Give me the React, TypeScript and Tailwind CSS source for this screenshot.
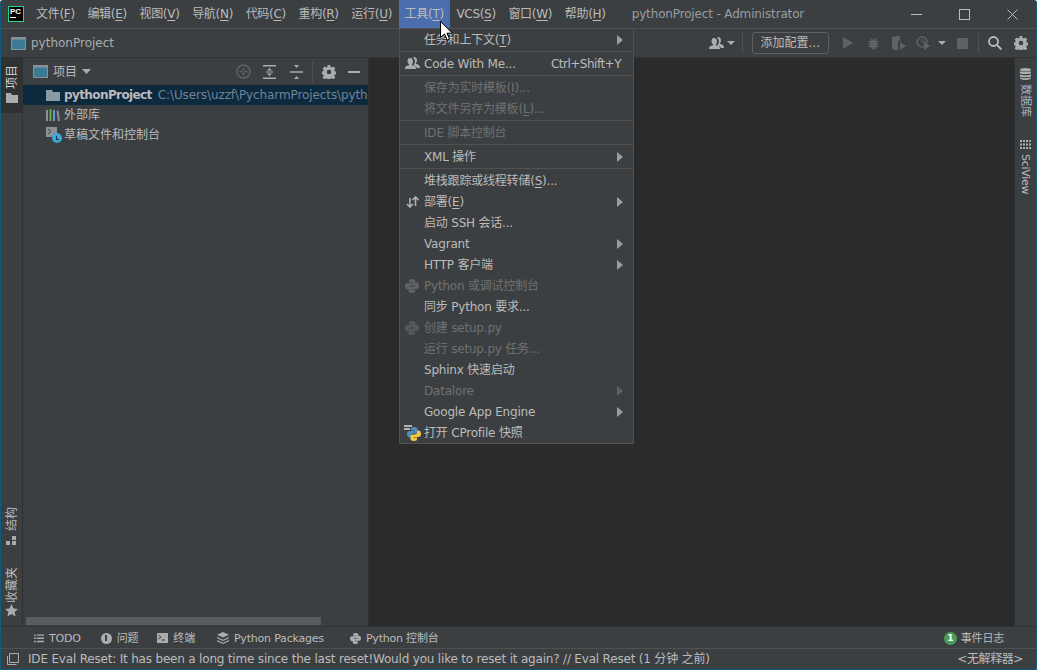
import type { ReactNode } from "react";

const font = "font-['DejaVu_Sans','Noto_Sans_CJK_SC',sans-serif]";

function Mn({ pre, k, post = ")" }: { pre: string; k: string; post?: string }) {
  return (
    <>
      {pre}
      <span className="underline underline-offset-2">{k}</span>
      {post}
    </>
  );
}

function TopItem({ children, active }: { children: ReactNode; active?: boolean }) {
  return (
    <div className={`flex h-full items-center whitespace-nowrap px-[6px] ${active ? "bg-[#4b6eaf] text-[#bbbbbb]" : ""}`}>
      {children}
    </div>
  );
}

function ProjectIcon({ className = "" }: { className?: string }) {
  return (
    <svg width="15" height="13" viewBox="0 0 15 13" className={className}>
      <rect x="0.5" y="0.5" width="14" height="12" fill="#3d7a96" stroke="#8a9299" />
      <rect x="1" y="1" width="13" height="1.5" fill="#8a9299" />
    </svg>
  );
}

function MenuRow({
  children,
  disabled,
  arrow,
  icon,
  right,
}: {
  children: ReactNode;
  disabled?: boolean;
  arrow?: boolean;
  icon?: ReactNode;
  right?: string;
}) {
  return (
    <div className={`relative flex h-[21px] items-center pl-[24px] pr-[12px] tracking-[-0.2px] ${disabled ? "text-[#6f7173]" : "text-[#bbbbbb]"}`}>
      {icon && <div className="absolute left-[3px] top-[2px] flex h-[17px] w-[18px] items-center justify-center">{icon}</div>}
      <span className="flex-1 whitespace-nowrap">{children}</span>
      {right && <span className="tracking-[-0.5px]">{right}</span>}
      {arrow && (
        <svg width="6" height="10" viewBox="0 0 6 10" className="-mr-[2px]">
          <path d="M0 0l6 5-6 5z" fill={disabled ? "#5f6264" : "#9a9da0"} />
        </svg>
      )}
    </div>
  );
}

function Sep() {
  return (
    <div className="flex h-[3px] items-center">
      <div className="h-px w-full bg-[#515151]" />
    </div>
  );
}

function PersonIcon({ fill = "#a9adb0" }: { fill?: string }) {
  return (
    <svg width="15" height="13" viewBox="0 0 15 13">
      <path d="M5 1c2 0 3 1.500 3 3.500 0 1.500-.7 2.500-1.200 3.200 0 .6 2.700 1 3.700 2 .3.400.5 1.300.5 2.300H0c0-1 .2-1.900.5-2.300 1-1 3.700-1.400 3.700-2C3.700 7 2.500 6 2.500 4.500 2.500 2.500 3 1 5 1z" fill={fill} />
      <path d="M9 0c2 0 3 1.500 3 3.300 0 1.500-.7 2.500-1.200 3.200 0 .6 2.700 1 3.500 2 .3.400.7 1.200.7 2.500h-3c-.5-1.500-3-2-3.500-3 .8-1 1.500-2.200 1.500-3.700C9.500 3 9.300 1.500 8 .3 8.300.1 8.600 0 9 0z" fill={fill} />
    </svg>
  );
}

function PythonGlyph({ a = "#5f6264", b = "#5f6264", size = 14 }: { a?: string; b?: string; size?: number }) {
  return (
    <svg width={size} height={size} viewBox="0 0 14 14">
      <path d="M7 0C4.500 0 4 1 4 2v1.500h3.500V4H2.500C1 4 0 5 0 7s1 3.500 2.300 3.500H3.800V8.700C3.800 7.500 4.700 6.600 6 6.600h2.800c1 0 1.700-.8 1.700-1.800V2C10.500 .9 9.500 0 7 0z" fill={a} />
      <path d="M7 14c2.500 0 3-1 3-2v-1.500H6.500V10h5c1.500 0 2.500-1 2.500-3s-1-3.500-2.300-3.500H10.200v1.800c0 1.200-.9 2.100-2.200 2.100H5.200c-1 0-1.700.8-1.700 1.800V12c0 1.100 1 2 3.500 2z" fill={b} />
    </svg>
  );
}

function ToolsMenu() {
  return (
    <div className="absolute left-[398px] top-[28px] z-10 w-[235px] border border-[#515151] bg-[#3c3f41]">
      <MenuRow arrow>
        任务和上下文(<Mn pre="" k="T" />
      </MenuRow>
      <Sep />
      <MenuRow icon={<PersonIcon />} right="Ctrl+Shift+Y">
        Code With Me...
      </MenuRow>
      <Sep />
      <MenuRow disabled>
        保存为实时模板(<Mn pre="" k="I" post=")..." />
      </MenuRow>
      <MenuRow disabled>
        将文件另存为模板(<Mn pre="" k="L" post=")..." />
      </MenuRow>
      <Sep />
      <MenuRow disabled>IDE 脚本控制台</MenuRow>
      <Sep />
      <MenuRow arrow>XML 操作</MenuRow>
      <Sep />
      <MenuRow>
        堆栈跟踪或线程转储(<Mn pre="" k="S" post=")..." />
      </MenuRow>
      <MenuRow
        arrow
        icon={
          <svg width="13" height="12" viewBox="0 0 13 12" fill="none" stroke="#afb1b3" strokeWidth="1.600">
            <path d="M4 2v9M1 8l3 3 3-3" />
            <path d="M9.500 10V1M6.500 4l3-3 3 3" />
          </svg>
        }
      >
        部署(<Mn pre="" k="E" />
      </MenuRow>
      <MenuRow>启动 SSH 会话...</MenuRow>
      <MenuRow arrow>Vagrant</MenuRow>
      <MenuRow arrow>HTTP 客户端</MenuRow>
      <MenuRow disabled icon={<PythonGlyph />}>
        Python 或调试控制台
      </MenuRow>
      <MenuRow>同步 Python 要求...</MenuRow>
      <MenuRow disabled icon={<PythonGlyph a="#56595b" b="#56595b" />}>
        创建 setup.py
      </MenuRow>
      <MenuRow disabled>运行 setup.py 任务...</MenuRow>
      <MenuRow>Sphinx 快速启动</MenuRow>
      <MenuRow disabled arrow>
        Datalore
      </MenuRow>
      <MenuRow arrow>Google App Engine</MenuRow>
      <MenuRow
        icon={
          <div className="relative h-[17px] w-[18px]">
            <div className="absolute left-[1px] top-[1px] h-[2px] w-[8px] bg-[#afb1b3]" />
            <div className="absolute left-[1px] top-[4px] h-[2px] w-[6px] bg-[#afb1b3]" />
            <div className="absolute bottom-0 right-0">
              <PythonGlyph a="#4d8fc4" b="#f4c93e" />
            </div>
          </div>
        }
      >
        打开 CProfile 快照
      </MenuRow>
    </div>
  );
}

function Cursor() {
  return (
    <svg width="14" height="20" viewBox="0 0 14 20" className="absolute left-[439px] top-[21px] z-20">
      <path d="M.5.5v16l4-3.500 2.700 6 2.300-1-2.600-5.800H12.500z" fill="#ffffff" stroke="#000000" strokeWidth="1" />
    </svg>
  );
}

function LeftStripe() {
  return (
    <div className="flex w-[22px] flex-none flex-col border-r border-[#2e3032] bg-[#3c3f41] text-[#bbbbbb]">
      <div className="flex h-[55px] flex-col items-center bg-[#2f3133] pt-[7px]">
        <span className="rotate-180 text-[#d0d0d0] [writing-mode:vertical-rl] [text-orientation:sideways]">项目</span>
        <svg width="12" height="10" viewBox="0 0 12 10" className="mt-[4px]">
          <path d="M0 0h5l1 2h6v8H0z" fill="#a9adb0" />
        </svg>
      </div>
      <div className="flex-1" />
      <div className="mb-[9px] flex flex-col items-center">
        <span className="rotate-180 [writing-mode:vertical-rl] [text-orientation:sideways]">结构</span>
        <svg width="11" height="9" viewBox="0 0 11 9" className="mt-[5px]">
          <path d="M0 5h4v4H0zM6 5h4v4H6zM6 0h4v4H6z" fill="#a9adb0" />
        </svg>
        <span className="mt-[22px] rotate-180 [writing-mode:vertical-rl] [text-orientation:sideways]">收藏夹</span>
        <svg width="13" height="13" viewBox="0 0 13 13" className="mt-[1px]">
          <path d="M6.500 0l2 4.500 4.500.4-3.400 3 1 4.600-4.100-2.400L2.400 12.500l1-4.600L0 4.900l4.500-.4z" fill="#a9adb0" />
        </svg>
      </div>
    </div>
  );
}

function ProjectPanel() {
  return (
    <div className="flex w-[345px] flex-none flex-col bg-[#3c3f41]">
      <div className="flex h-[27px] flex-none items-center pl-[10px] pr-[8px]">
        <ProjectIcon />
        <span className="ml-[5px]">项目</span>
        <svg width="9" height="5" viewBox="0 0 9 5" className="ml-[5px]">
          <path d="M0 0h9L4.500 5z" fill="#a9adb0" />
        </svg>
        <div className="flex-1" />
        <svg width="15" height="15" viewBox="0 0 15 15" fill="none" stroke="#5f6264" strokeWidth="1.500" className="mr-[12px]">
          <circle cx="7.500" cy="7.500" r="6.500" />
          <path d="M7.500 3.500v3M7.500 8.500v3M3.500 7.500h3M8.500 7.500h3" />
        </svg>
        <svg width="13" height="14" viewBox="0 0 13 14" className="mr-[14px]" fill="#a9adb0">
          <path d="M0 0h13v1.500H0zM0 12.500h13V14H0zM6.500 3l2.500 2.500H4zM6.500 11L4 8.500h5zM3 6.500h7v1H3z" />
        </svg>
        <svg width="13" height="14" viewBox="0 0 13 14" className="mr-[9px]" fill="#a9adb0">
          <path d="M0 6.300h13v1.400H0zM4 0h5L6.500 3zM6.500 11L9 14H4z" />
        </svg>
        <div className="mr-[9px] h-[20px] w-px bg-[#515151]" />
        <GearIcon className="mr-[12px]" />
        <div className="h-[2px] w-[12px] bg-[#a9adb0]" />
      </div>
      <div className="flex h-[20px] flex-none items-center overflow-hidden whitespace-nowrap bg-[#0d293e] pl-[23px]">
        <svg width="14" height="11" viewBox="0 0 14 11" className="flex-none">
          <path d="M0 0h6l1 2h7v9H0z" fill="#8a9ba8" />
        </svg>
        <span className="ml-[4px] font-bold tracking-[-0.6px] text-[#bbbbbb]">pythonProject</span>
        <span className="ml-[6px] tracking-[-0.1px] text-[#6f8496]">C:\Users\uzzf\PycharmProjects\pythonProject</span>
      </div>
      <div className="flex h-[20px] flex-none items-center pl-[23px]">
        <svg width="14" height="12" viewBox="0 0 14 12" className="flex-none">
          <path d="M0 1h2v11H0z" fill="#8a9299" />
          <path d="M3.500 0h2v12h-2z" fill="#6aab50" />
          <path d="M7 1h2v11H7z" fill="#5c9ccf" />
          <path d="M10.500 2l2-.5 1.500 10.500-2 .000z" fill="#8a9299" />
        </svg>
        <span className="ml-[4px] text-[#bbbbbb]">外部库</span>
      </div>
      <div className="flex h-[20px] flex-none items-center pl-[23px]">
        <div className="relative h-[16px] w-[15px] flex-none">
          <svg width="11" height="10" viewBox="0 0 11 10" className="absolute left-0 top-0">
            <rect width="11" height="10" fill="#8a9299" />
            <path d="M2 2l3 2.500L2 7" fill="none" stroke="#3c3f41" />
          </svg>
          <div className="absolute bottom-0 right-[-1px] flex h-[10px] w-[10px] items-center justify-center rounded-full bg-[#3aa6dc]">
            <div className="mb-[1px] h-[4px] w-[3px] border-b border-l border-[#1d3a4c]" />
          </div>
        </div>
        <span className="ml-[3px] text-[#bbbbbb]">草稿文件和控制台</span>
      </div>
      <div className="flex-1" />
      <div className="mb-[1px] ml-[3px] h-[8px] w-[295px] flex-none bg-[#5a5c5e]" />
    </div>
  );
}

function GearIcon({ className = "" }: { className?: string }) {
  return (
    <svg width="14" height="14" viewBox="0 0 14 14" className={className}>
      <path
        fillRule="evenodd"
        d="M5.700 0h2.600l.3 2 1.200.6 1.700-1.100 1.800 1.900-1.100 1.600.5 1.300 2 .3v2.700l-2 .3-.5 1.200 1.100 1.700-1.800 1.800-1.700-1.100-1.200.5-.3 2H5.700l-.4-2-1.200-.5-1.600 1.100L.6 12.500l1.100-1.700L1.200 9.600-.1 9.300V6.600l1.300-.3.5-1.300L.6 3.400l1.900-1.900 1.600 1.100 1.200-.6zM7 4.700a2.300 2.300 0 100 4.600 2.300 2.300 0 000-4.600z"
        fill="#a9adb0"
      />
    </svg>
  );
}

function RightStripe() {
  return (
    <div className="flex w-[22px] flex-none flex-col items-center border-l border-[#2e3032] bg-[#3c3f41] pt-[10px] text-[11px] text-[#a9b4bd]">
      <svg width="11" height="12" viewBox="0 0 11 12" fill="#a9adb0">
        <ellipse cx="5.500" cy="1.800" rx="5.500" ry="1.800" />
        <path d="M0 3.200c1 1 10 1 11 0v2c-1 1.200-10 1.200-11 0zM0 6.400c1 1 10 1 11 0v2c-1 1.200-10 1.200-11 0zM0 9.500c1 1 10 1 11 0v.7c-1 2.400-10 2.400-11 0z" />
      </svg>
      <span className="mt-[4px] [writing-mode:vertical-rl] [text-orientation:sideways]">数据库</span>
      <svg width="11" height="9" viewBox="0 0 11 9" fill="#a9adb0" className="mt-[23px]">
        <path d="M0 0h2v2H0zM3 0h2v2H3zM6 0h2v2H6zM9 0h2v2H9zM0 3.500h2v2H0zM3 3.500h2v2H3zM6 3.500h2v2H6zM9 3.500h2v2H9zM0 7h2v2H0zM3 7h2v2H3zM6 7h2v2H6zM9 7h2v2H9z" />
      </svg>
      <span className="mt-[5px] tracking-[-0.3px] text-[#bbbbbb] [writing-mode:vertical-rl] [text-orientation:sideways]">SciView</span>
    </div>
  );
}

function ToolTab({ icon, label, className = "" }: { icon: ReactNode; label: string; className?: string }) {
  return (
    <div className={`flex items-center gap-[5px] ${className}`}>
      {icon}
      <span>{label}</span>
    </div>
  );
}

export default function App() {
  return (
    <div className={`${font} relative flex h-[670px] w-[1037px] flex-col overflow-hidden rounded-t-[3px] border-b border-l border-r border-[#0f5d7e] bg-[#3c3f41] text-[12px] leading-none text-[#bbbbbb]`}>
      {/* title bar */}
      <div className="flex h-[29px] flex-none items-center border-b border-[#515151]">
        <div className="ml-[7px] flex h-[16px] w-[16px] flex-none flex-col border border-[#21d789] bg-black pl-px pt-px">
          <span className="font-['Liberation_Sans',sans-serif] text-[8px] font-bold leading-[8px] text-white">PC</span>
          <div className="mt-[1px] h-px w-[6px] bg-white" />
        </div>
        <div className="ml-[6px] flex h-full items-center">
          <div className="flex h-full gap-[0.6px] tracking-[-0.3px]">
            <TopItem><Mn pre="文件(" k="F" /></TopItem>
            <TopItem><Mn pre="编辑(" k="E" /></TopItem>
            <TopItem><Mn pre="视图(" k="V" /></TopItem>
            <TopItem><Mn pre="导航(" k="N" /></TopItem>
            <TopItem><Mn pre="代码(" k="C" /></TopItem>
            <TopItem><Mn pre="重构(" k="R" /></TopItem>
            <TopItem><Mn pre="运行(" k="U" /></TopItem>
            <TopItem active><Mn pre="工具(" k="T" /></TopItem>
            <TopItem><Mn pre="VCS(" k="S" /></TopItem>
            <TopItem><Mn pre="窗口(" k="W" /></TopItem>
            <TopItem><Mn pre="帮助(" k="H" /></TopItem>
          </div>
          <span className="ml-[20px] whitespace-nowrap tracking-[-0.15px] text-[#9a9da0]">pythonProject - Administrator</span>
        </div>
        <div className="flex-1" />
        <div className="mr-[37px] h-px w-[11px] bg-[#bbbbbb]" />
        <div className="mr-[37px] h-[11px] w-[11px] border border-[#bbbbbb]" />
        <svg width="11" height="11" viewBox="0 0 11 11" stroke="#bbbbbb" className="mr-[18px]">
          <path d="M.5.500l10 10M10.500.500l-10 10" />
        </svg>
      </div>

      {/* navigation toolbar */}
      <div className="flex h-[29px] flex-none items-center border-b border-[#323232] pl-[10px]">
        <ProjectIcon />
        <span className="ml-[5px] text-[#a9adb0]">pythonProject</span>
        <div className="flex-1" />
        <PersonIcon />
        <svg width="8" height="4" viewBox="0 0 8 4" className="ml-[3px]">
          <path d="M0 0h8L4 4z" fill="#a9adb0" />
        </svg>
        <div className="ml-[7px] h-[20px] w-px bg-[#515151]" />
        <div className="ml-[9px] flex h-[22px] items-center rounded-[3px] border border-[#5e6060] px-[8px]">添加配置...</div>
        <svg width="10" height="12" viewBox="0 0 10 12" className="ml-[14px]">
          <path d="M0 0l10 6-10 6z" fill="#5f6264" />
        </svg>
        <svg width="13" height="13" viewBox="0 0 13 13" className="ml-[14px]">
          <path d="M4 1l1 1.500h3L9 1l1 .5-1 1.500.5 1H12v1H10v1.500h2v1H10V9h2v1H9.500c-.5 1.500-1.500 2.500-3 2.500S4 11.500 3.500 10H1V9h2V7.500H1v-1h2V5H1V4h2.500l.5-1-1-1.500z" fill="#5f6264" />
        </svg>
        <svg width="15" height="14" viewBox="0 0 15 14" className="ml-[12px]">
          <path d="M0 1l5-1h3v4l-2 1.500V14H2l-2-2z" fill="#5f6264" />
          <path d="M8 6l6 4-6 4z" fill="#5f6264" />
        </svg>
        <svg width="15" height="14" viewBox="0 0 15 14" className="ml-[9px]" fill="none">
          <circle cx="6" cy="6" r="5" stroke="#5f6264" strokeWidth="1.500" />
          <path d="M6 3v3h3" stroke="#5f6264" />
          <path d="M8 6l6 4-6 4z" fill="#5f6264" />
        </svg>
        <svg width="8" height="4" viewBox="0 0 8 4" className="ml-[7px]">
          <path d="M0 0h8L4 4z" fill="#a9adb0" />
        </svg>
        <div className="ml-[11px] h-[11px] w-[11px] bg-[#5f6264]" />
        <div className="ml-[10px] h-[20px] w-px bg-[#515151]" />
        <svg width="14" height="14" viewBox="0 0 14 14" fill="none" stroke="#bbbbbb" strokeWidth="1.800" className="ml-[9px]">
          <circle cx="5.500" cy="5.500" r="4.500" />
          <path d="M9 9l4.500 4.500" />
        </svg>
        <GearIcon className="ml-[12px] mr-[8px]" />
      </div>

      {/* main area */}
      <div className="flex min-h-0 flex-1">
        <LeftStripe />
        <ProjectPanel />
        <div className="flex-1 border-l border-[#323232] bg-[#2b2b2b]" />
        <RightStripe />
      </div>

      {/* tool window bar */}
      <div className="flex h-[22px] flex-none items-center border-t border-[#323232] pl-[33px] pr-[32px] pt-px text-[11px] tracking-[-0.2px]">
        <ToolTab
          label="TODO"
          icon={
            <svg width="10" height="9" viewBox="0 0 11 9" fill="#a9adb0">
              <path d="M0 0h2v1.500H0zM3 0h8v1.500H3zM0 3.500h2V5H0zM3 3.500h8V5H3zM0 7h2v1.500H0zM3 7h8v1.500H3z" />
            </svg>
          }
        />
        <ToolTab
          className="ml-[20px]"
          label="问题"
          icon={
            <div className="flex h-[11px] w-[11px] items-center justify-center rounded-full bg-[#a9adb0]">
              <div className="h-[6px] w-[2px] bg-[#3c3f41]" />
            </div>
          }
        />
        <ToolTab
          className="ml-[19px]"
          label="终端"
          icon={
            <svg width="11" height="10" viewBox="0 0 11 10">
              <rect width="11" height="10" fill="#a9adb0" />
              <path d="M1.500 2l2.500 2-2.500 2M4.500 7H8" stroke="#3c3f41" fill="none" />
            </svg>
          }
        />
        <ToolTab
          className="ml-[22px]"
          label="Python Packages"
          icon={
            <svg width="12" height="12" viewBox="0 0 12 12" fill="#a9adb0">
              <path d="M6 0l6 2.800-6 2.800L0 2.800zM0 5l6 2.800L12 5v1.300L6 9 0 6.300zM0 8l6 2.700L12 8v1.300L6 12 0 9.300z" />
            </svg>
          }
        />
        <ToolTab
          className="ml-[26px]"
          label="Python 控制台"
          icon={<PythonGlyph a="#a9adb0" b="#a9adb0" size={11} />}
        />
        <div className="flex-1" />
        <div className="flex h-[13px] w-[13px] items-center justify-center rounded-full bg-[#499c54] text-[9px] font-bold text-white">1</div>
        <span className="ml-[4px]">事件日志</span>
      </div>

      {/* status bar */}
      <div className="flex h-[21px] flex-none items-center border-t border-[#515151] pr-[13px]">
        <svg width="12" height="12" viewBox="0 0 12 12" fill="none" stroke="#a9adb0" className="ml-[6px] flex-none">
          <path d="M2.500 .5h9v9h-9z" />
          <path d="M.5 3v8.500h9" />
        </svg>
        <span className="ml-[9px] whitespace-nowrap tracking-[-0.19px]">IDE Eval Reset: It has been a long time since the last reset!Would you like to reset it again? // Eval Reset (1 分钟 之前)</span>
        <div className="flex-1" />
        <span className="tracking-[-0.4px]">&lt;无解释器&gt;</span>
      </div>

      <ToolsMenu />
      <Cursor />
    </div>
  );
}
